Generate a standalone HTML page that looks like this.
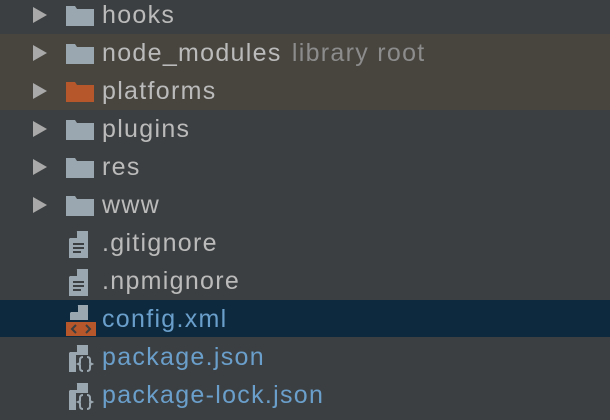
<!DOCTYPE html>
<html><head><style>
body{margin:0;width:610px;height:420px;overflow:hidden;background:#3c3f41;font-family:"Liberation Sans",sans-serif;position:relative}
.r{position:absolute;left:0;width:610px;height:38px}
.t{position:absolute;left:102px;top:4px;font-size:25px;line-height:30px;color:#bbbbbb;white-space:nowrap;letter-spacing:1.3px}
.b{color:#6a9fcb}
.tri{position:absolute;left:33px;top:11px;width:0;height:0;border-top:8px solid transparent;border-bottom:8px solid transparent;border-left:14px solid #a9a9a9}
.ic{position:absolute;left:64px;top:6px}
</style></head><body>
<div class="r" style="top:34px;height:76px;background:#48453f"></div>
<div class="r" style="top:300px;height:37px;background:#0d293e"></div>

<div class="r" style="top:-4px"><div class="tri"></div><svg class="ic" width="32" height="26"><path d="M2 4h9l2 3h17v17H2z" fill="#9aa7b0"/></svg><div class="t">hooks</div></div>
<div class="r" style="top:34px"><div class="tri"></div><svg class="ic" width="32" height="26"><path d="M2 4h9l2 3h17v17H2z" fill="#9aa7b0"/></svg><div class="t">node_modules <span style="color:#8c8c8c;margin-left:2px">library root</span></div></div>
<div class="r" style="top:72px"><div class="tri"></div><svg class="ic" width="32" height="26"><path d="M2 4h9l2 3h17v17H2z" fill="#b5572a"/></svg><div class="t">platforms</div></div>
<div class="r" style="top:110px"><div class="tri"></div><svg class="ic" width="32" height="26"><path d="M2 4h9l2 3h17v17H2z" fill="#9aa7b0"/></svg><div class="t">plugins</div></div>
<div class="r" style="top:148px"><div class="tri"></div><svg class="ic" width="32" height="26"><path d="M2 4h9l2 3h17v17H2z" fill="#9aa7b0"/></svg><div class="t">res</div></div>
<div class="r" style="top:186px"><div class="tri"></div><svg class="ic" width="32" height="26"><path d="M2 4h9l2 3h17v17H2z" fill="#9aa7b0"/></svg><div class="t">www</div></div>

<div class="r" style="top:224px"><svg class="ic" width="32" height="32" style="top:4px"><path d="M13 3h11v27H5V11z" fill="#9aa7b0"/><path d="M5 10l8-7v7z" fill="#3c3f41"/><path d="M9 16h11M9 20h11M9 24h8" stroke="#3c3f41" stroke-width="2"/></svg><div class="t">.gitignore</div></div>
<div class="r" style="top:262px"><svg class="ic" width="32" height="32" style="top:4px"><path d="M13 3h11v27H5V11z" fill="#9aa7b0"/><path d="M5 10l8-7v7z" fill="#3c3f41"/><path d="M9 16h11M9 20h11M9 24h8" stroke="#3c3f41" stroke-width="2"/></svg><div class="t">.npmignore</div></div>
<div class="r" style="top:300px"><svg class="ic" width="32" height="34" style="top:3px;left:64px"><path d="M14 2h10v15H6V10z" fill="#9aa7b0"/><path d="M6 9l8-7v7z" fill="#0d293e"/><rect x="2" y="19" width="30" height="14" fill="#b5572a"/><path d="M12 22l-4 4 4 4M22 22l4 4-4 4" stroke="#3c3f41" stroke-width="2" fill="none"/></svg><div class="t b">config.xml</div></div>
<div class="r" style="top:338px"><svg class="ic" width="32" height="32" style="top:4px"><path d="M13 3h11v27H5V11z" fill="#9aa7b0"/><path d="M5 10l8-7v7z" fill="#3c3f41"/><rect x="12" y="13" width="18" height="18" fill="#3c3f41"/><path d="M19 15q-3 0-3 3v3l-2 1 2 1v3q0 3 3 3M23 15q3 0 3 3v3l2 1-2 1v3q0 3-3 3" stroke="#9aa7b0" stroke-width="2" fill="none"/></svg><div class="t b">package.json</div></div>
<div class="r" style="top:376px"><svg class="ic" width="32" height="32" style="top:4px"><path d="M13 3h11v27H5V11z" fill="#9aa7b0"/><path d="M5 10l8-7v7z" fill="#3c3f41"/><rect x="12" y="13" width="18" height="18" fill="#3c3f41"/><path d="M19 15q-3 0-3 3v3l-2 1 2 1v3q0 3 3 3M23 15q3 0 3 3v3l2 1-2 1v3q0 3-3 3" stroke="#9aa7b0" stroke-width="2" fill="none"/></svg><div class="t b">package-lock.json</div></div>
</body></html>
